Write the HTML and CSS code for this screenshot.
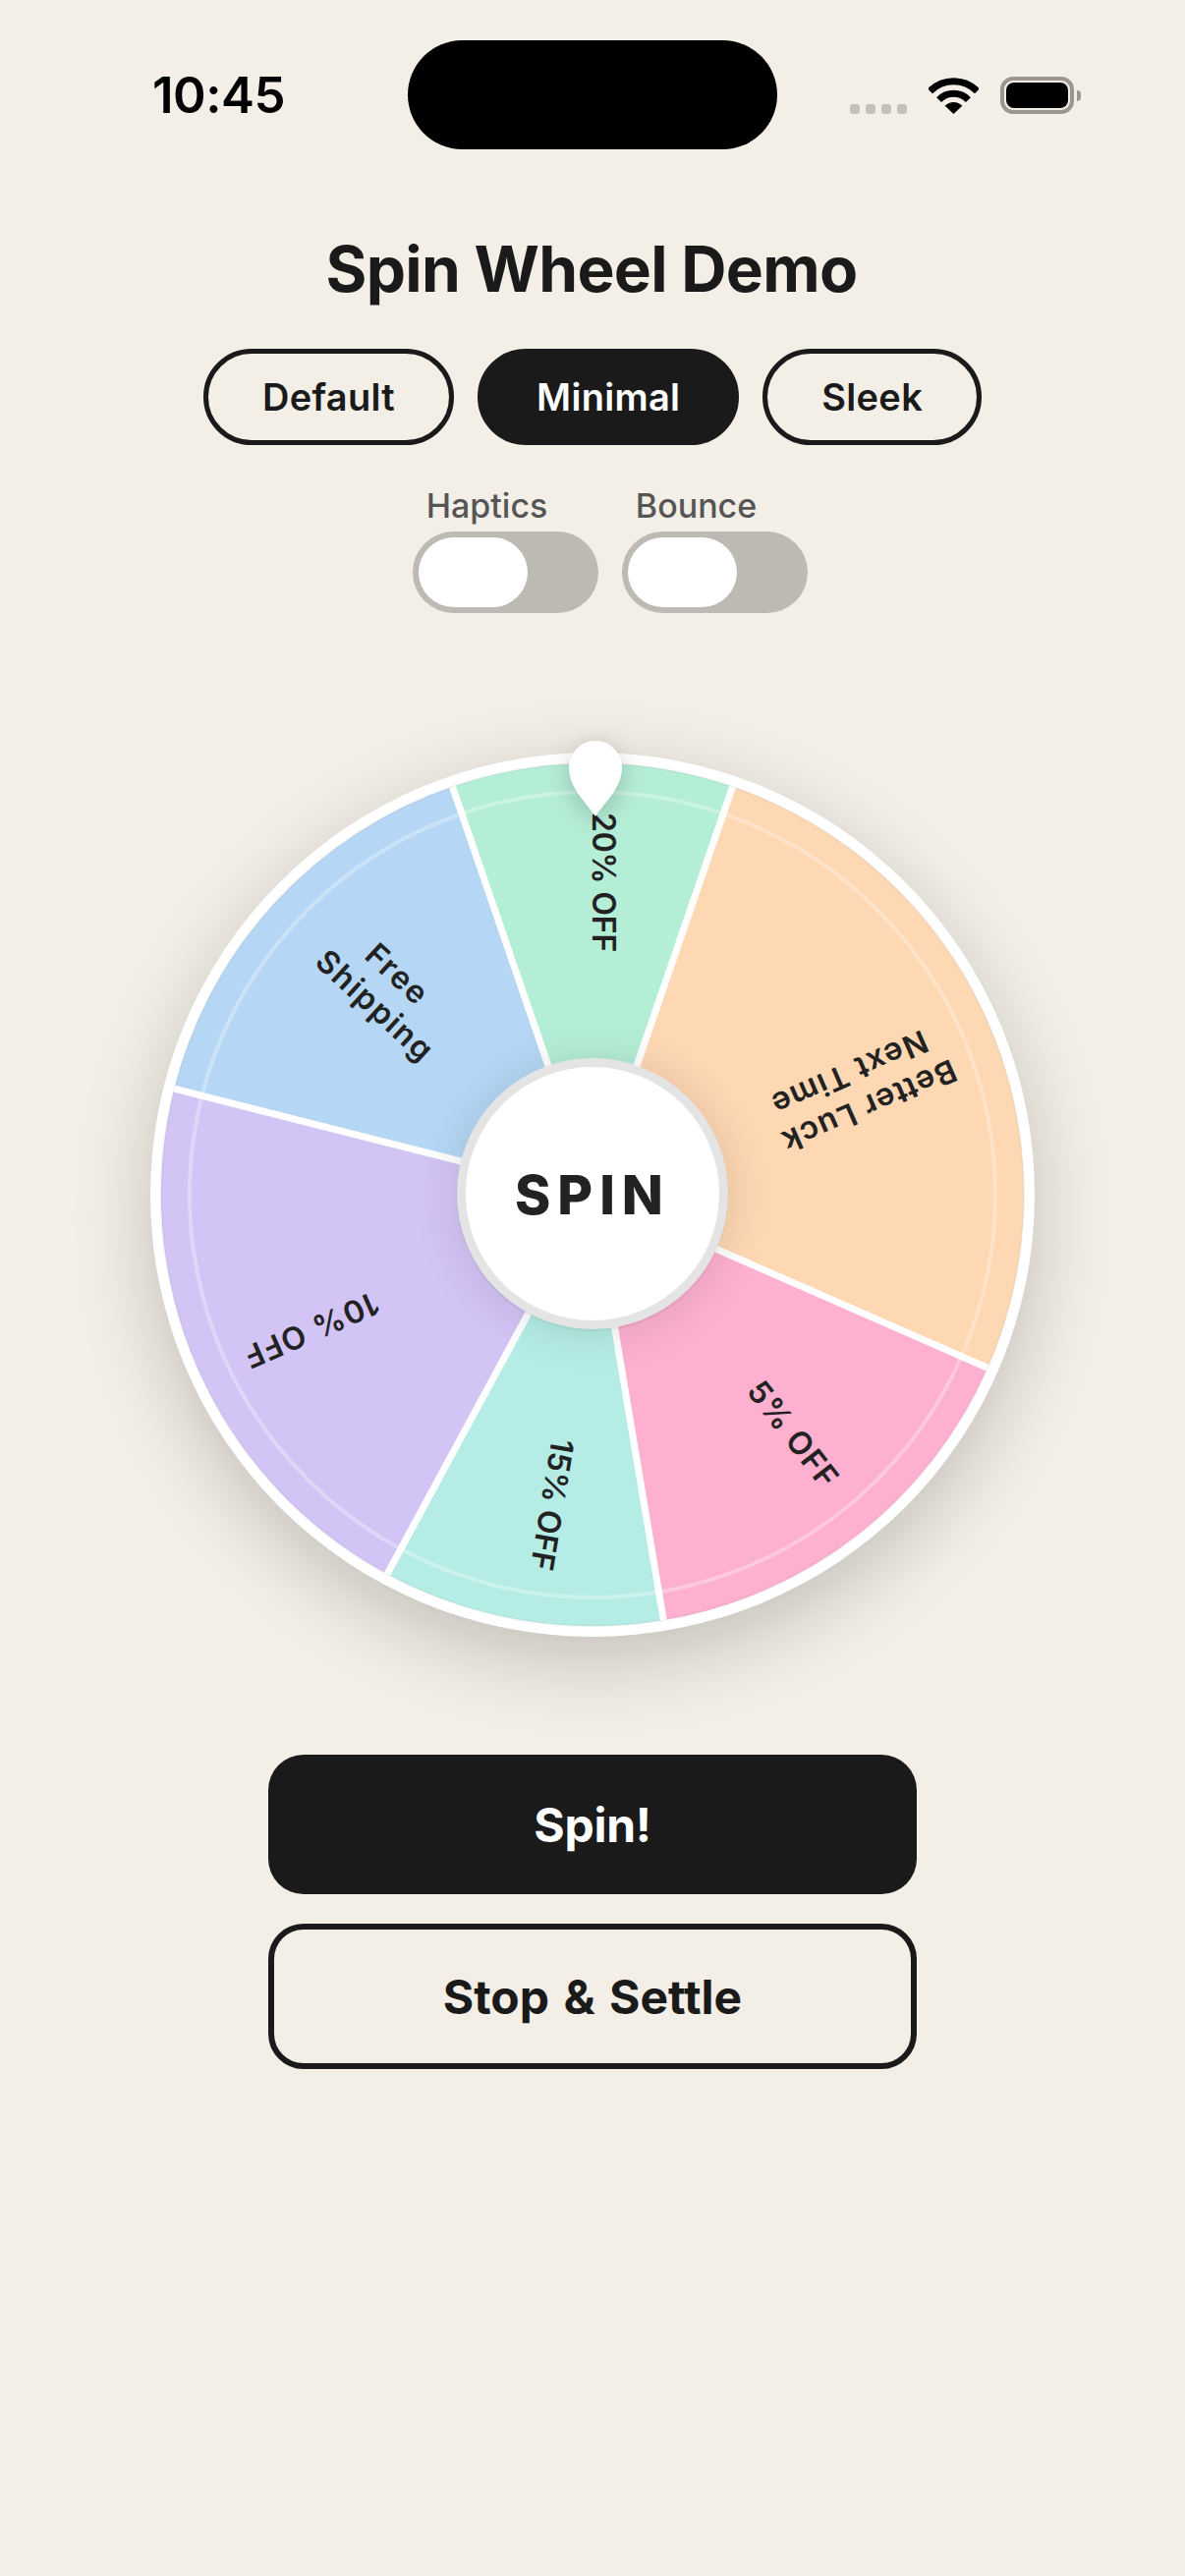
FILE: index.html
```html
<!DOCTYPE html>
<html lang="en">

<head>
    <meta charset="UTF-8">
    <meta name="viewport" content="width=device-width, initial-scale=1.0">
    <title>Spin Wheel Demo</title>
    <link rel="stylesheet" href="styles.css">
</head>

<body>
    <div class="status-bar">
        <div class="status-time">10:45</div>
        <div class="status-island"></div>
        <div class="status-icons">
            <div class="signal-dots"><span></span><span></span><span></span><span></span></div>
            <svg class="wifi-icon" width="51" height="37" viewBox="0 0 51 37">
                <path class="wifi-arc" d="M1.5 13.8A33.5 33.5 0 0 1 49.5 13.8" />
                <path class="wifi-arc" d="M10.6 22.6A20.8 20.8 0 0 1 40.4 22.6" />
                <path d="M25.5 37L16.7 28.8A12 12 0 0 1 34.3 28.8Z" />
            </svg>
            <div class="battery">
                <div class="battery-body"><div class="battery-level"></div></div>
                <div class="battery-tip"></div>
            </div>
        </div>
    </div>

    <h1 class="page-title">Spin Wheel Demo</h1>

    <div class="style-tabs">
        <button class="style-tab">Default</button>
        <button class="style-tab active">Minimal</button>
        <button class="style-tab">Sleek</button>
    </div>

    <div class="toggles">
        <div class="toggle-item">
            <div class="toggle-label">Haptics</div>
            <div class="toggle-track"><div class="toggle-knob"></div></div>
        </div>
        <div class="toggle-item">
            <div class="toggle-label">Bounce</div>
            <div class="toggle-track"><div class="toggle-knob"></div></div>
        </div>
    </div>

    <div class="wheel">
        <svg class="wheel-face" width="900" height="900" viewBox="0 0 900 900">
            <!-- segments, weights 2 5 3 2 4 3 out of 19 -->
            <path class="seg-green" d="M450 450L307.5 34.8A439 439 0 0 1 592.5 34.8Z" />
            <path class="seg-orange" d="M450 450L592.5 34.8A439 439 0 0 1 852 626.3Z" />
            <path class="seg-pink" d="M450 450L852 626.3A439 439 0 0 1 522.3 883Z" />
            <path class="seg-teal" d="M450 450L522.3 883A439 439 0 0 1 241.1 836.1Z" />
            <path class="seg-purple" d="M450 450L241.1 836.1A439 439 0 0 1 24.4 342.2Z" />
            <path class="seg-blue" d="M450 450L24.4 342.2A439 439 0 0 1 307.5 34.8Z" />

            <circle class="wheel-ring" cx="450" cy="450" r="410" />
            <circle class="wheel-edge" cx="450" cy="450" r="439" />

            <line class="seg-line" x1="450" y1="450" x2="307.5" y2="34.8" />
            <line class="seg-line" x1="450" y1="450" x2="592.5" y2="34.8" />
            <line class="seg-line" x1="450" y1="450" x2="852" y2="626.3" />
            <line class="seg-line" x1="450" y1="450" x2="522.3" y2="883" />
            <line class="seg-line" x1="450" y1="450" x2="241.1" y2="836.1" />
            <line class="seg-line" x1="450" y1="450" x2="24.4" y2="342.2" />

            <text class="seg-label" x="450" y="132" transform="rotate(90 450 132)">20% OFF</text>
            <text class="seg-label spaced-md" transform="rotate(66.316 450 450) rotate(90 450 161)">
                <tspan x="450" y="141.5">Better Luck</tspan>
                <tspan x="450" y="180.5">Next Time</tspan>
            </text>
            <text class="seg-label spaced-sm" x="450" y="132" transform="rotate(142.105 450 450) rotate(-90 450 132)">5% OFF</text>
            <text class="seg-label" x="450" y="132" transform="rotate(189.474 450 450) rotate(-90 450 132)">15% OFF</text>
            <text class="seg-label spaced-md" x="450" y="132" transform="rotate(246.316 450 450) rotate(-90 450 132)">10% OFF</text>
            <text class="seg-label spaced-lg" transform="rotate(312.632 450 450) rotate(90 450 157)">
                <tspan x="450" y="137.5">Free</tspan>
                <tspan x="450" y="176.5">Shipping</tspan>
            </text>
        </svg>

        <svg class="wheel-pointer" width="54" height="78" viewBox="0 0 54 78">
            <path d="M27 77C19 64 0 49 0 27A27 27 0 0 1 54 27C54 49 35 64 27 77Z" />
        </svg>

        <div class="wheel-hub">SPIN</div>
    </div>

    <div class="actions">
        <button class="action-btn primary">Spin!</button>
        <button class="action-btn outline">Stop &amp; Settle</button>
    </div>
</body>

</html>
```

FILE: styles.css
```css
* {
    box-sizing: border-box;
}

body {
    margin: 0;
    width: 1206px;
    height: 2622px;
    background-color: #f3efe7;
    color: #1a1a1a;
    font-family: Inter, "Noto Sans", sans-serif;
    overflow: hidden;
}

button {
    font-family: inherit;
    cursor: pointer;
}

/* status bar */
.status-bar {
    display: grid;
    grid-template-columns: 1fr 376px 1fr;
    padding-top: 41px;
}

.status-time {
    padding-left: 155px;
    font-size: 51px;
    font-weight: 600;
    line-height: 111px;
    color: #000;
    letter-spacing: -0.5px;
}

.status-island {
    height: 111px;
    background-color: #000;
    border-radius: 56px;
}

.status-icons {
    display: flex;
    align-items: flex-end;
    height: 75px;
    padding-left: 74px;
}

.signal-dots {
    display: flex;
    gap: 6px;
    margin-right: 22px;
}

.signal-dots span {
    width: 10px;
    height: 10px;
    background-color: #c5c1ba;
    border-radius: 3px;
}

.wifi-icon {
    margin-right: 22px;
}

.wifi-arc {
    fill: none;
    stroke: #000;
    stroke-width: 7;
}

.battery {
    display: flex;
    align-items: center;
}

.battery-body {
    width: 75px;
    height: 38px;
    padding: 2px;
    border: 4px solid #9b978f;
    border-radius: 13px;
}

.battery-level {
    height: 100%;
    background-color: #000;
    border-radius: 8px;
}

.battery-tip {
    width: 4px;
    height: 11px;
    margin-left: 3px;
    background-color: #9b978f;
    border-radius: 0 4px 4px 0;
}

/* header */
.page-title {
    margin: 84px 0 0;
    padding-right: 2px;
    font-size: 64px;
    font-weight: 700;
    line-height: 76px;
    letter-spacing: -0.7px;
    text-align: center;
}

.style-tabs {
    display: flex;
    justify-content: center;
    gap: 24px;
    margin-top: 43px;
}

.style-tab {
    height: 98px;
    padding: 0 55px;
    font-size: 38px;
    font-weight: 600;
    letter-spacing: 0.3px;
    color: #1a1a1a;
    background: transparent;
    border: 5px solid #1a1a1a;
    border-radius: 49px;
}

.style-tab.active {
    color: #fff;
    background-color: #1a1a1a;
}

/* toggles */
.toggles {
    display: flex;
    justify-content: center;
    gap: 24px;
    margin-top: 42px;
    padding-right: 2px;
}

.toggle-item {
    display: flex;
    flex-direction: column;
    align-items: center;
    width: 189px;
}

.toggle-label {
    font-size: 34px;
    font-weight: 500;
    line-height: 40px;
    color: #555;
    white-space: nowrap;
}

.toggle-track {
    flex-shrink: 0;
    width: 189px;
    height: 83px;
    margin-top: 6px;
    margin-left: 38px;
    padding: 6px;
    background-color: #bdb9b3;
    border-radius: 42px;
}

.toggle-knob {
    width: 111px;
    height: 71px;
    background-color: #fff;
    border-radius: 36px;
}

/* wheel */
.wheel {
    position: relative;
    width: 900px;
    height: 900px;
    margin: 142px auto 0;
    background-color: #fff;
    border-radius: 50%;
    box-shadow: 0 24px 80px rgba(0, 0, 0, 0.2);
}

.wheel-face {
    display: block;
}

.seg-green { fill: #b5eed6; }
.seg-orange { fill: #fed7b3; }
.seg-pink { fill: #feb0d0; }
.seg-teal { fill: #b5ede6; }
.seg-purple { fill: #d3c4f6; }
.seg-blue { fill: #b5d7f5; }

.wheel-ring {
    fill: none;
    stroke: rgba(255, 255, 255, 0.3);
    stroke-width: 4;
}

.wheel-edge {
    fill: none;
    stroke: rgba(0, 0, 0, 0.05);
    stroke-width: 2;
}

.seg-line {
    stroke: #fff;
    stroke-width: 7;
}

.seg-label {
    font-size: 32px;
    font-weight: 600;
    letter-spacing: -0.2px;
    fill: #222;
    text-anchor: middle;
}

.seg-label.spaced-sm {
    letter-spacing: 1px;
}

.seg-label.spaced-md {
    letter-spacing: 1.4px;
}

.seg-label.spaced-lg {
    letter-spacing: 1.7px;
}

.wheel-pointer {
    position: absolute;
    top: -12px;
    left: 426px;
    fill: #fff;
    filter: drop-shadow(0 6px 12px rgba(0, 0, 0, 0.2));
}

.wheel-hub {
    position: absolute;
    top: 311px;
    left: 312px;
    display: flex;
    align-items: center;
    justify-content: center;
    width: 276px;
    height: 276px;
    padding-top: 2px;
    font-size: 55px;
    font-weight: 800;
    letter-spacing: 7px;
    color: #222;
    background-color: #fff;
    border: 9px solid #e4e4e4;
    border-radius: 50%;
    box-shadow: 0 2px 2px rgba(0, 0, 0, 0.06), 0 3px 48px rgba(0, 0, 0, 0.12);
}

/* buttons */
.actions {
    display: flex;
    flex-direction: column;
    align-items: center;
    gap: 30px;
    margin-top: 120px;
}

.action-btn {
    width: 660px;
    font-size: 48px;
    font-weight: 700;
    word-spacing: 3px;
    border-radius: 36px;
}

.action-btn.primary {
    height: 142px;
    letter-spacing: -0.3px;
    color: #fff;
    background-color: #1a1a1a;
    border: none;
}

.action-btn.outline {
    height: 148px;
    color: #1a1a1a;
    background: transparent;
    border: 6px solid #1a1a1a;
}
```
